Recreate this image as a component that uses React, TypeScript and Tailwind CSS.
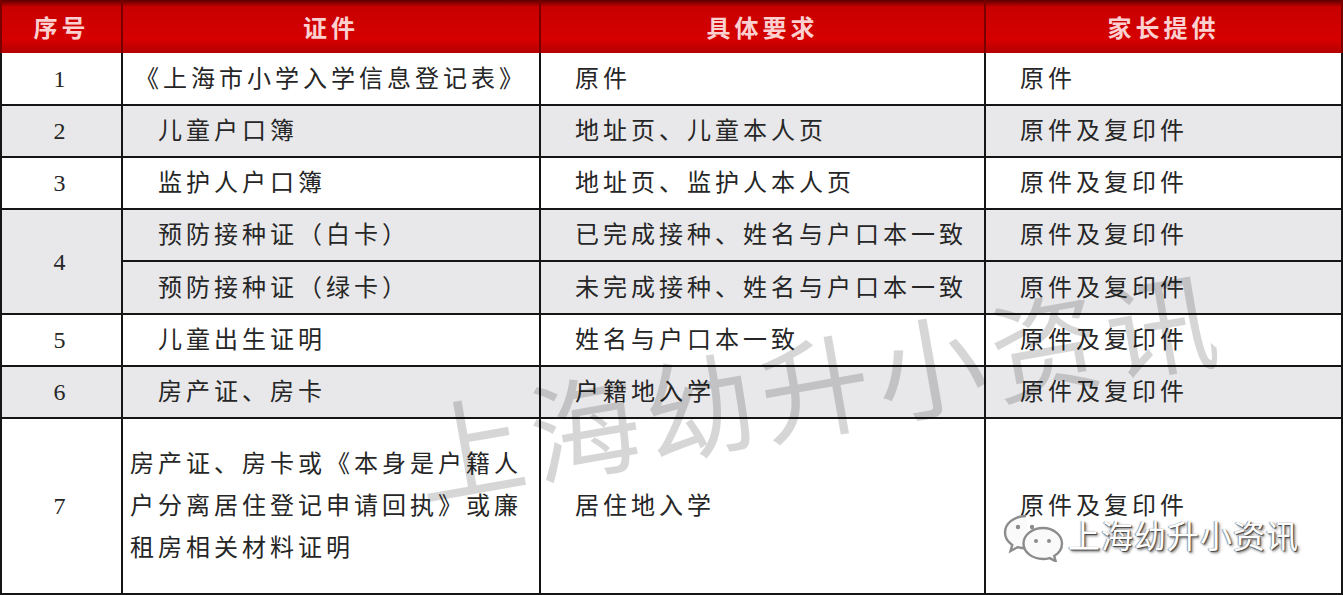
import React from 'react'

const rows = [
	{ no: '1', doc: '《上海市小学入学信息登记表》', req: '原件', give: '原件', gray: false, center: true },
	{ no: '2', doc: '儿童户口簿', req: '地址页、儿童本人页', give: '原件及复印件', gray: true },
	{ no: '3', doc: '监护人户口簿', req: '地址页、监护人本人页', give: '原件及复印件', gray: false },
]

const rowsAfter = [
	{ no: '5', doc: '儿童出生证明', req: '姓名与户口本一致', give: '原件及复印件', gray: false },
	{ no: '6', doc: '房产证、房卡', req: '户籍地入学', give: '原件及复印件', gray: true },
]

const cellBase = 'flex items-center text-[24px] tracking-[4px] text-[#262626]'

function WeChatIcon() {
	return (
		<svg width="64" height="50" viewBox="0 0 64 50" fill="none">
			<path
				d="M24 4C12 4 3 11.5 3 20.5c0 5 2.8 9.4 7.3 12.4L8.5 39l7-3.8c2.6.8 5.5 1.2 8.5 1.2 1 0 2-.1 3-.2"
				stroke="#8c8c8c"
				strokeWidth="2.4"
				fill="#fafafa"
			/>
			<path
				d="M41 16c-11 0-19.5 7-19.5 15.5S30 47 41 47c2.4 0 4.6-.3 6.7-.9l6 3.2-1.5-5.3c4.7-2.8 7.8-7.4 7.8-12.5C60 23 51.5 16 41 16z"
				stroke="#8c8c8c"
				strokeWidth="2.4"
				fill="#fafafa"
			/>
			<circle cx="16" cy="15" r="2.2" fill="#8c8c8c" />
			<circle cx="30" cy="15" r="2.2" fill="#8c8c8c" />
			<circle cx="34" cy="29" r="2" fill="#8c8c8c" />
			<circle cx="47" cy="29" r="2" fill="#8c8c8c" />
		</svg>
	)
}

export default function App() {
	return (
		<div className="relative w-[1343px] h-[595px] overflow-hidden bg-white font-['Liberation_Serif','Noto_Sans_CJK_SC',serif]">
			{/* Header */}
			<div className="grid h-[53px] grid-cols-[119px_416px_443px_355px] gap-x-[2px] bg-[#7a0000] px-[2px]">
				{['序号', '证件', '具体要求', '家长提供'].map((h) => (
					<div
						key={h}
						className="flex items-center justify-center bg-[linear-gradient(to_bottom,#5a0000_0px,#c80000_7px,#d60000_40px,#b40000_53px)] pt-[4px] text-[24px] font-bold tracking-[4px] text-[#fcd0d0]"
					>
						{h}
					</div>
				))}
			</div>

			{/* Body */}
			<div className="grid grid-cols-[119px_416px_443px_355px] grid-rows-[51px_50px_50px_50px_51px_50px_50px_174px] gap-[2px] bg-[#151515] px-[2px] pb-[2px]">
				{rows.map((r) => {
					const bg = r.gray ? 'bg-[#e8e8ea]' : 'bg-white'
					return (
						<React.Fragment key={r.no}>
							<div className={`${cellBase} ${bg} justify-center`}>{r.no}</div>
							<div className={`${cellBase} ${bg} ${r.center ? 'justify-center' : 'pl-[35px]'}`}>{r.doc}</div>
							<div className={`${cellBase} ${bg} pl-[34px]`}>{r.req}</div>
							<div className={`${cellBase} ${bg} pl-[34px]`}>{r.give}</div>
						</React.Fragment>
					)
				})}

				{/* Row 4 spans two lines */}
				<div className={`${cellBase} row-span-2 justify-center bg-[#e8e8ea]`}>4</div>
				<div className={`${cellBase} bg-[#e8e8ea] pl-[35px]`}>预防接种证（白卡）</div>
				<div className={`${cellBase} bg-[#e8e8ea] pl-[34px]`}>已完成接种、姓名与户口本一致</div>
				<div className={`${cellBase} bg-[#e8e8ea] pl-[34px]`}>原件及复印件</div>
				<div className={`${cellBase} bg-[#e8e8ea] pl-[35px]`}>预防接种证（绿卡）</div>
				<div className={`${cellBase} bg-[#e8e8ea] pl-[34px]`}>未完成接种、姓名与户口本一致</div>
				<div className={`${cellBase} bg-[#e8e8ea] pl-[34px]`}>原件及复印件</div>

				{rowsAfter.map((r) => {
					const bg = r.gray ? 'bg-[#e8e8ea]' : 'bg-white'
					return (
						<React.Fragment key={r.no}>
							<div className={`${cellBase} ${bg} justify-center`}>{r.no}</div>
							<div className={`${cellBase} ${bg} pl-[35px]`}>{r.doc}</div>
							<div className={`${cellBase} ${bg} pl-[34px]`}>{r.req}</div>
							<div className={`${cellBase} ${bg} pl-[34px]`}>{r.give}</div>
						</React.Fragment>
					)
				})}

				<div className={`${cellBase} justify-center bg-white`}>7</div>
				<div className={`${cellBase} bg-white pl-[7px] leading-[42px]`}>
					<p>
						房产证、房卡或《本身是户籍人
						<br />
						户分离居住登记申请回执》或廉
						<br />
						租房相关材料证明
					</p>
				</div>
				<div className={`${cellBase} bg-white pl-[34px]`}>居住地入学</div>
				<div className={`${cellBase} bg-white pl-[34px]`}>原件及复印件</div>
			</div>

			{/* Diagonal watermark */}
			<div className="pointer-events-none absolute left-[416px] top-[408px] origin-left -rotate-[10deg] whitespace-nowrap text-[110px] font-normal leading-none tracking-[7px] text-black/[0.16]">
				上海幼升小资讯
			</div>

			{/* Account badge */}
			<div className="pointer-events-none absolute left-[1002px] top-[512px] flex items-center gap-[2px]">
				<WeChatIcon />
				<span className="text-[32px] leading-none tracking-[1px] text-white [text-shadow:1px_1px_1px_#444,2px_2px_3px_#777,-1px_0_1px_#999]">
					上海幼升小资讯
				</span>
			</div>
		</div>
	)
}
